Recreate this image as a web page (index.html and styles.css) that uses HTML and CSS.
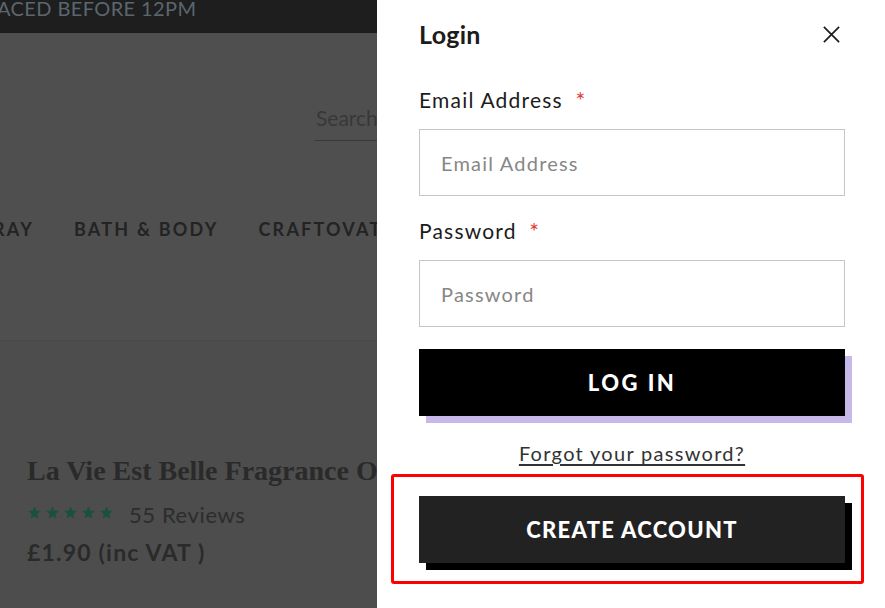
FILE: index.html
```html
<!DOCTYPE html>
<html lang="en">
<head>
    <meta charset="UTF-8">
    <meta name="viewport" content="width=device-width, initial-scale=1.0">
    <title>Login</title>
    <link rel="stylesheet" href="styles.css">
</head>
<body>
    <div class="page">
        <div class="banner"><span>ACED BEFORE 12PM</span></div>
        <header class="header">
            <div class="search">Search</div>
            <nav class="nav">
                <a href="#">RAY</a>
                <a href="#">BATH &amp; BODY</a>
                <a href="#">CRAFTOVATOR</a>
            </nav>
        </header>
        <main class="product">
            <h2 class="product-title">La Vie Est Belle Fragrance Oil</h2>
            <div class="rating">
                <span class="stars">
                    <svg viewBox="0 0 24 24"><path d="M12 2l2.9 6.9 7.1.6-5.4 4.7 1.6 7.3L12 17.8 5.8 21.5l1.6-7.3L2 9.5l7.1-.6z"/></svg>
                    <svg viewBox="0 0 24 24"><path d="M12 2l2.9 6.9 7.1.6-5.4 4.7 1.6 7.3L12 17.8 5.8 21.5l1.6-7.3L2 9.5l7.1-.6z"/></svg>
                    <svg viewBox="0 0 24 24"><path d="M12 2l2.9 6.9 7.1.6-5.4 4.7 1.6 7.3L12 17.8 5.8 21.5l1.6-7.3L2 9.5l7.1-.6z"/></svg>
                    <svg viewBox="0 0 24 24"><path d="M12 2l2.9 6.9 7.1.6-5.4 4.7 1.6 7.3L12 17.8 5.8 21.5l1.6-7.3L2 9.5l7.1-.6z"/></svg>
                    <svg viewBox="0 0 24 24"><path d="M12 2l2.9 6.9 7.1.6-5.4 4.7 1.6 7.3L12 17.8 5.8 21.5l1.6-7.3L2 9.5l7.1-.6z"/></svg>
                </span>
                <span class="reviews">55 Reviews</span>
            </div>
            <div class="price">£1.90 (inc VAT )</div>
        </main>
    </div>

    <aside class="drawer">
        <div class="drawer-head">
            <h1>Login</h1>
            <button class="close" type="button" aria-label="Close">
                <svg viewBox="0 0 20 20"><path d="M2 2L18 18M18 2L2 18"/></svg>
            </button>
        </div>
        <form class="login-form">
            <label for="email">Email Address <span class="req">*</span></label>
            <input id="email" type="email" placeholder="Email Address">
            <label for="password">Password <span class="req">*</span></label>
            <input id="password" type="password" placeholder="Password">
            <button class="btn btn-login" type="button">LOG IN</button>
            <a class="forgot" href="#">Forgot your password?</a>
            <div class="highlight">
                <button class="btn btn-create" type="button">CREATE ACCOUNT</button>
            </div>
        </form>
    </aside>
</body>
</html>
```

FILE: styles.css
```css
body {
    margin: 0;
    font-family: 'Lato', 'Noto Sans', sans-serif;
    overflow: hidden;
    height: 608px;
    background: #4d4d4d;
}
.page {
    width: 100%;
    color: #262626;
}
.banner {
    height: 33px;
    background: #1e1e1e;
    overflow: hidden;
}
.banner span {
    display: block;
    margin-top: -4px;
    margin-left: -3px;
    font-size: 20px;
    line-height: 24px;
    letter-spacing: 0.4px;
    color: #5b6670;
}
.header {
    height: 307px;
    background: #4f4f4f;
    border-bottom: 1px solid #4a4a4a;
    display: flex;
    flex-direction: column;
}
.search {
    margin: 68px 0 0 315px;
    width: 120px;
    padding: 4px 1px 10px;
    font-size: 21px;
    color: #383838;
    border-bottom: 1px solid #3a3a3a;
}
.nav {
    display: flex;
    gap: 40px;
    margin: 77px 0 0 -7px;
    white-space: nowrap;
}
.nav a {
    font-size: 18px;
    font-weight: 700;
    letter-spacing: 2.2px;
    color: #232323;
    text-decoration: none;
}
.product {
    padding: 114px 0 0 27px;
    white-space: nowrap;
}
.product-title {
    margin: 0;
    font-family: 'Liberation Serif', serif;
    font-size: 28px;
    font-weight: 700;
    line-height: 32px;
    color: #2a2a2a;
}
.rating {
    display: flex;
    align-items: center;
    gap: 15px;
    margin-top: 14px;
}
.stars {
    display: flex;
    gap: 3px;
    margin-top: -5px;
}
.stars svg {
    width: 15px;
    height: 15px;
    fill: #1b5040;
}
.reviews {
    font-size: 22px;
    letter-spacing: 0.6px;
    color: #2c2c2c;
}
.price {
    margin-top: 10px;
    font-size: 23px;
    font-weight: 700;
    letter-spacing: 1.2px;
    color: #2a2a2a;
}

/* panel de login */
.drawer {
    position: fixed;
    top: 0;
    right: 0;
    bottom: 0;
    width: 508px;
    background: #fff;
    padding: 0 40px 0 42px;
    box-sizing: border-box;
    color: #1c1c1c;
}
.drawer-head {
    height: 68px;
    display: flex;
    align-items: center;
    justify-content: space-between;
}
.drawer-head h1 {
    margin: -1px 0 0;
    font-size: 25px;
    font-weight: 700;
    letter-spacing: 0.3px;
}
.close {
    border: none;
    background: none;
    padding: 0;
    margin-right: 4px;
    width: 19px;
    height: 19px;
    cursor: pointer;
}
.close svg {
    width: 19px;
    height: 19px;
    stroke: #1c1c1c;
    stroke-width: 1.8;
    fill: none;
}
.login-form {
    display: flex;
    flex-direction: column;
}
.login-form label {
    margin-top: 20px;
    font-size: 21px;
    line-height: 24px;
    letter-spacing: 1.2px;
}
.login-form label[for="password"] {
    margin-top: 23px;
}
.req {
    display: inline-block;
    color: #e23b3b;
    margin-left: 6px;
    font-size: 23px;
    vertical-align: -1px;
}
.login-form input {
    margin-top: 17px;
    height: 67px;
    border: 1px solid #c6c6c6;
    padding: 0 21px;
    box-sizing: border-box;
    font-family: inherit;
    font-size: 20px;
    letter-spacing: 1.2px;
    color: #333;
    outline: none;
}
.login-form input::placeholder {
    color: #878787;
}
.btn {
    height: 67px;
    border: none;
    color: #fff;
    font-family: inherit;
    font-size: 22px;
    font-weight: 900;
    letter-spacing: 1.3px;
    cursor: pointer;
}
.btn-login {
    margin-top: 22px;
    background: #000;
    box-shadow: 7px 7px 0 #c6b9ea;
    letter-spacing: 2.5px;
}
.forgot {
    align-self: center;
    margin-top: 25px;
    font-size: 20px;
    line-height: 24px;
    letter-spacing: 1.3px;
    color: #333;
    text-decoration: underline;
    text-underline-offset: 3px;
}
.highlight {
    margin: 9px -19px 0 -28px;
    border: 3px solid #ff0000;
    border-radius: 3px;
    padding: 19px 16px 18px 25px;
    display: flex;
    flex-direction: column;
}
.btn-create {
    width: 100%;
    background: #222;
    box-shadow: 7px 7px 0 #000;
}
```
